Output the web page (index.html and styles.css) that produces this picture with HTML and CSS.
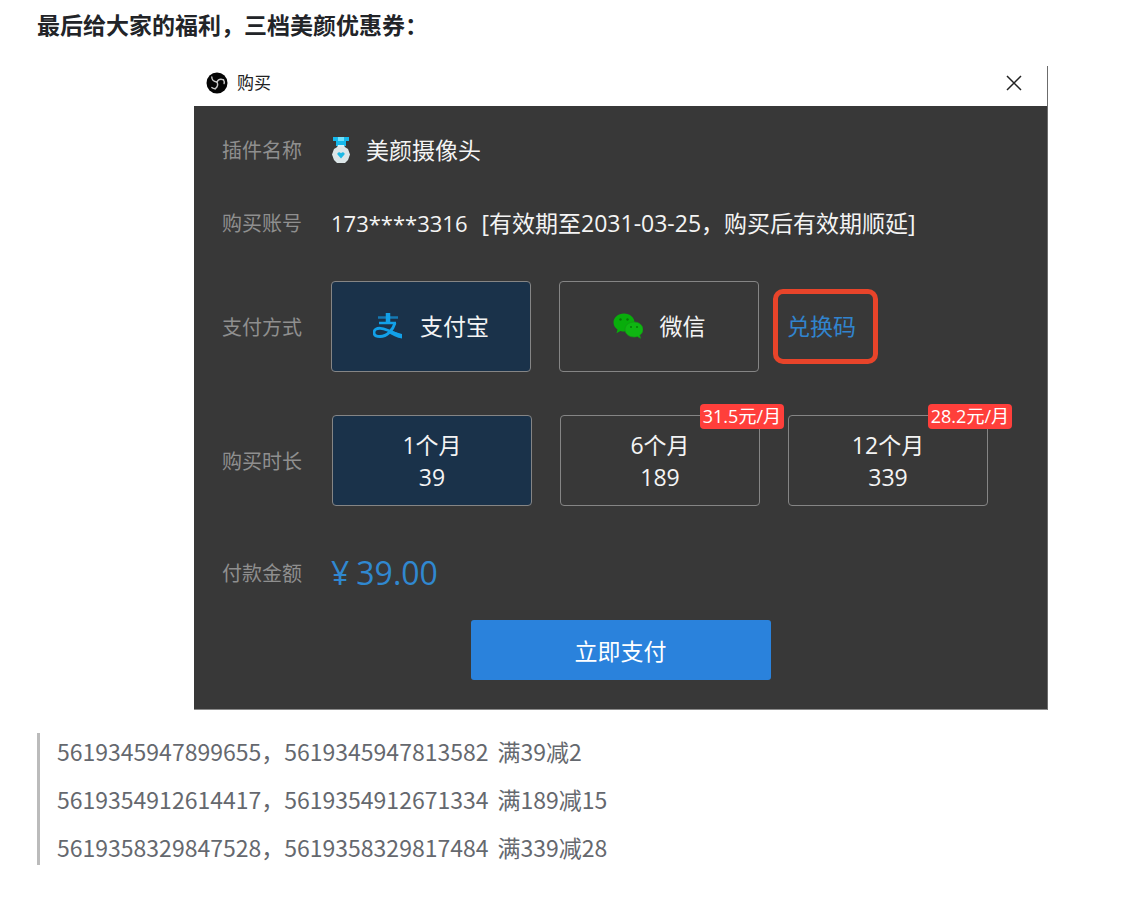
FILE: index.html
```html
<!DOCTYPE html>
<html lang="zh-CN">
<head>
<meta charset="utf-8">
<meta name="viewport" content="width=device-width, initial-scale=1">
<title>美颜优惠券</title>
<link rel="stylesheet" href="styles.css">
</head>
<body>
<main class="article">
  <h1 class="heading">最后给大家的福利，三档美颜优惠券：</h1>

  <div class="figure">
    <section class="dialog" aria-labelledby="dialog-title">
      <header class="titlebar">
        <svg class="app-icon" viewBox="0 0 22 22" aria-hidden="true">
          <circle cx="11" cy="11" r="10.5" fill="#050505"/>
          <g fill="none" stroke="#c9c9c9" stroke-width="1.4" stroke-linecap="round">
            <path d="M5.800 5c0 2.800 1.700 4.500 5 5"/>
            <path d="M11 10c1-2.200 3.500-3.200 6.500-2.200"/>
            <path d="M17.500 7.800c.8 1.200 1 2.400.6 3.800"/>
            <path d="M11 10c1.300 2.600.4 5-1.800 6.800"/>
            <path d="M9.200 16.800c-1.400 0-2.500-.4-3.400-1.200"/>
          </g>
        </svg>
        <h2 class="title" id="dialog-title">购买</h2>
        <button class="close" type="button" aria-label="关闭">
          <svg viewBox="0 0 16 16" aria-hidden="true"><path d="M1 1l14 14M15 1L1 15" fill="none" stroke="#222" stroke-width="1.5"/></svg>
        </button>
      </header>

      <div class="panel">
        <div class="row">
          <span class="label">插件名称</span>
          <span class="plugin">
            <svg class="medal" viewBox="0 0 20 28" aria-hidden="true">
              <path d="M2 1h16v4h-3v5H5V5H2z" fill="#16b9ec"/>
              <path d="M7 1h6v4H7z" fill="#6fe0fa"/>
              <path d="M7 9h6l1 3H6z" fill="#d9f3fa"/>
              <path d="M7 10.500h6l4 2.500 2 5.500-2 5.500-3 3H6l-3-3-2-5.500L3 13z" fill="#dce6e8"/>
              <path d="M10 22.500l-3.500-4c-.8-2 2-3.200 3.500-1.300 1.500-1.900 4.300-.7 3.500 1.300z" fill="#1cb9e4"/>
            </svg>
            美颜摄像头
          </span>
        </div>
        <div class="row">
          <span class="label">购买账号</span>
          <span class="account"><span>173****3316</span><span class="validity">[有效期至2031-03-25，购买后有效期顺延]</span></span>
        </div>
        <div class="row">
          <span class="label">支付方式</span>
          <div class="methods">
            <button class="option selected" type="button" aria-pressed="true">
              <svg class="pay-icon" viewBox="0 0 30 26" aria-hidden="true">
                <g fill="none" stroke="#12a0e8">
                  <path d="M5 4.500h20" stroke-width="2.500" stroke="#1579b3"/>
                  <path d="M15 0v10" stroke-width="4.500"/>
                  <path d="M6 10h17" stroke-width="2.500"/>
                  <path d="M22 10c-2 7-8 13.500-15 13.500-4 0-6-1.500-6-4 0-3 3-4.500 6.500-4.200 6 .5 13 4.200 21 8" stroke-width="2.800"/>
                </g>
                <path d="M15 17l14 4v4.500c-5-.5-10-3.500-14-6z" fill="#12a0e8"/>
              </svg>
              支付宝
            </button>
            <button class="option" type="button" aria-pressed="false">
              <svg class="pay-icon" viewBox="0 0 30 26" aria-hidden="true">
                <path d="M11 .5C5 .5.500 4.500.500 9.500c0 3 1.500 5.300 4 7l-1 3.800 4-2.200c1.300.4 2.300.5 3.500.5 6 0 10.500-4 10.500-9S17 .5 11 .5z" fill="#08ad0b"/>
                <path d="M21 9c-5 0-9 3.300-9 7.500s4 7.500 9 7.500c1.200 0 2.300-.2 3.300-.6l3.200 1.900-.7-3.200c2-1.400 3.200-3.300 3.200-5.600C30 12.300 26 9 21 9z" fill="#0fb612" stroke="#159315" stroke-width=".7"/>
                <g fill="#087808"><circle cx="7.500" cy="6.500" r="1.200"/><circle cx="14.500" cy="6.500" r="1.200"/><circle cx="18" cy="14" r="1"/><circle cx="24" cy="14" r="1"/></g>
              </svg>
              微信
            </button>
            <a class="redeem" href="#redeem">兑换码</a>
          </div>
        </div>
        <div class="row">
          <span class="label">购买时长</span>
          <div class="plans">
            <button class="option plan selected" type="button" aria-pressed="true"><span>1个月</span><span>39</span></button>
            <button class="option plan" type="button" aria-pressed="false"><span>6个月</span><span>189</span><span class="badge">31.5元/月</span></button>
            <button class="option plan" type="button" aria-pressed="false"><span>12个月</span><span>339</span><span class="badge">28.2元/月</span></button>
          </div>
        </div>
        <div class="row total">
          <span class="label">付款金额</span>
          <span class="amount"><span>¥</span><span>39.00</span></span>
        </div>
        <button class="submit" type="button">立即支付</button>
      </div>
    </section>
  </div>

  <blockquote class="codes">
    <p><span>5619345947899655，5619345947813582</span> <span>满39减2</span></p>
    <p><span>5619354912614417，5619354912671334</span> <span>满189减15</span></p>
    <p><span>5619358329847528，5619358329817484</span> <span>满339减28</span></p>
  </blockquote>
</main>
</body>
</html>
```
FILE: styles.css
```css
* {
  box-sizing: border-box;
}

body {
  margin: 0;
  background: #fff;
  color: #222428;
  font-family: "Noto Sans CJK SC", sans-serif;
  font-size: 23px;
}

button {
  font: inherit;
  cursor: pointer;
}

.article {
  padding: 7px 0 30px 37px;
}

.heading {
  margin: 0 0 25px;
  font-size: 23px;
  line-height: 34px;
  font-weight: 700;
}

.figure {
  display: flex;
  justify-content: center;
  margin-bottom: 23px;
  padding-left: 57px;
}

.dialog {
  width: 100%;
  max-width: 854px;
  border-right: 1px solid #6c6c6c;
  border-bottom: 1px solid #8a8a8a;
  font-family: "Open Sans", "Noto Sans CJK SC", sans-serif;
}

.titlebar {
  display: flex;
  align-items: center;
  height: 40px;
  padding: 0 22px 6px 12px;
  color: #222;
}

.app-icon {
  width: 22px;
  height: 22px;
}

.title {
  flex: 1;
  margin: 0 0 0 9px;
  font-size: 17px;
  line-height: 24px;
  font-weight: 400;
}

.close {
  display: flex;
  padding: 3px;
  border: 0;
  background: none;
}

.close svg {
  width: 16px;
  height: 16px;
}

.panel {
  display: flex;
  flex-direction: column;
  gap: 43px;
  padding: 29px 28px;
  background: #383838;
  color: #f4f4f4;
}

.row {
  display: grid;
  grid-template-columns: 109px 1fr;
  align-items: center;
  line-height: 30px;
}

.label {
  padding-top: 2px;
  color: #8f8f8f;
  font-size: 20px;
  line-height: 28px;
}

.plugin,
.account,
.methods,
.plans,
.amount {
  display: flex;
  align-items: center;
}

.plugin {
  gap: 15px;
}

.medal {
  width: 20px;
  height: 28px;
}

.account {
  gap: 14px;
  font-size: 22px;
  white-space: nowrap;
}

.validity {
  font-size: 23px;
}

.methods,
.plans {
  gap: 28px;
}

.plans {
  padding-left: 1px;
}

.option {
  display: flex;
  align-items: center;
  justify-content: center;
  gap: 17px;
  width: 200px;
  height: 91px;
  padding: 0 0 2px;
  border: 1px solid #858585;
  border-radius: 4px;
  background: none;
  color: #f4f4f4;
}

.option.selected {
  background: #1a324a;
}

.pay-icon {
  width: 30px;
  height: 26px;
}

.redeem {
  margin-left: -14px;
  padding: 17px 17px 18px 9px;
  border: 5px solid #e8442a;
  border-radius: 10px;
  color: #3184ce;
  text-decoration: none;
  white-space: nowrap;
}

.plan {
  position: relative;
  flex-direction: column;
  gap: 0;
  padding: 0;
  line-height: 32px;
}

.badge {
  position: absolute;
  top: -12px;
  right: -25px;
  padding: 0 3px;
  border-radius: 4px;
  background: #ff3f3b;
  color: #fff;
  font-size: 18px;
  line-height: 25px;
  white-space: nowrap;
}

.total {
  line-height: 48px;
}

.amount {
  gap: 7px;
  color: #3088d0;
  font-size: 32px;
}

.submit {
  align-self: center;
  width: 300px;
  height: 60px;
  margin-top: -20px;
  border: 0;
  border-radius: 3px;
  background: #2a82dc;
  color: #fff;
}

.codes {
  display: grid;
  gap: 12px;
  margin: 0;
  padding-left: 17px;
  border-left: 3px solid #bbb;
  color: #65686e;
}

.codes p {
  display: flex;
  flex-wrap: wrap;
  column-gap: 9px;
  margin: 0;
  line-height: 36px;
}
```
